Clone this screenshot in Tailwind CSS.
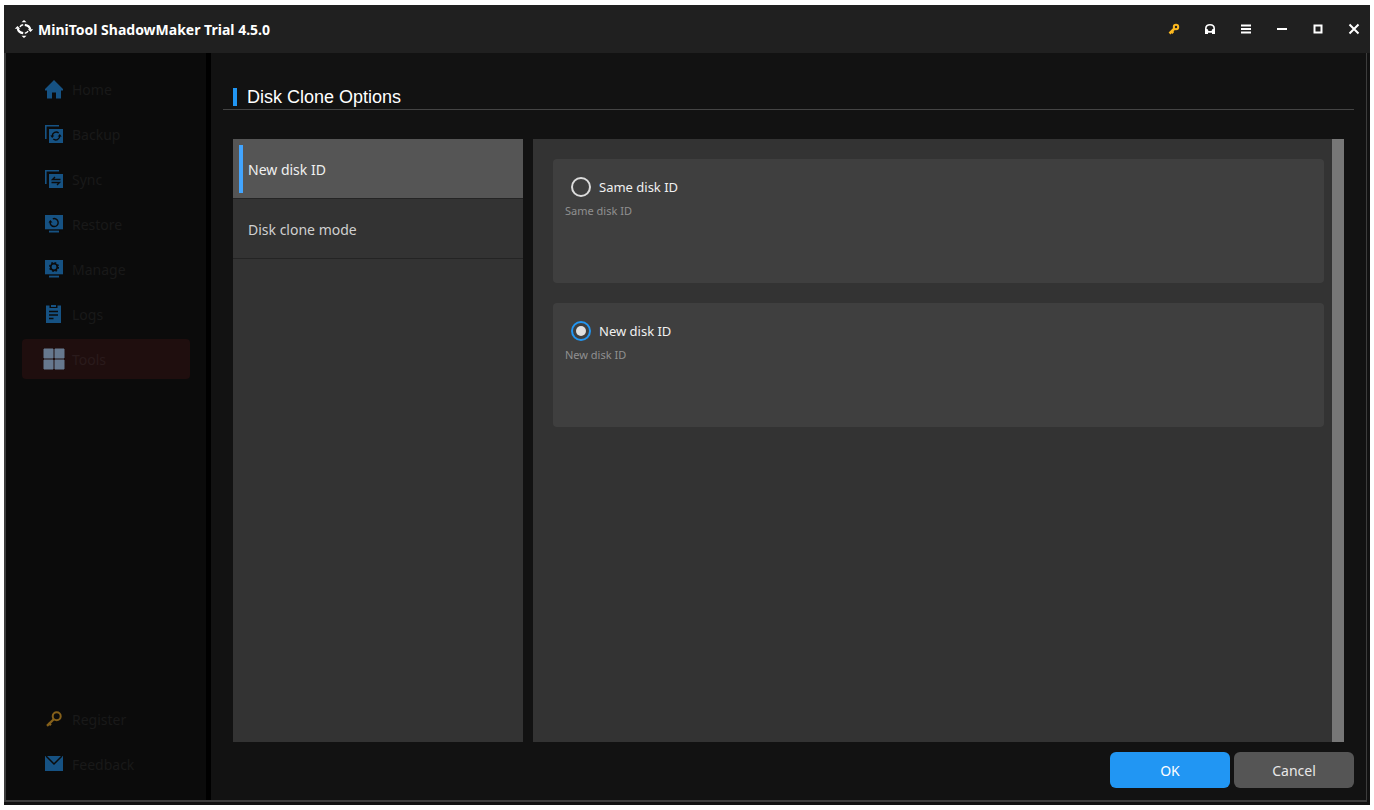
<!DOCTYPE html>
<html lang="en">
<head>
<meta charset="utf-8">
<title>MiniTool ShadowMaker Trial 4.5.0</title>
<script src="https://cdn.jsdelivr.net/npm/@tailwindcss/browser@4"></script>
</head>
<body class="flex h-screen flex-col bg-white px-1 py-[5px] font-['Noto_Sans',sans-serif] text-white">
<div class="flex min-h-0 flex-1 flex-col bg-[#121212] pb-[3px]">
  <header class="flex h-12 shrink-0 items-center justify-between bg-[#202020] px-[10px]">
    <div class="flex items-center gap-1">
      <svg class="size-5" viewBox="0 0 20 20" fill="#fff">
        <path d="M10 1 12.500 3.200H7.500zM10 19l2.500-2.200H7.500z"/>
        <path d="M.8 9.800 3.500 7 6.200 9.800zM19.200 10.200 16.500 13 13.800 10.200z"/>
        <path d="M3.800 9.500c.4 2.800 2.300 4.300 5.400 4.700M16.200 10.500c-.4-2.800-2.300-4.300-5.400-4.700" fill="none" stroke="#fff" stroke-width="2.200"/>
        <path d="M9.200 5.800C7.500 6 6.500 6.800 6 8M10.800 14.200c1.700-.2 2.700-1 3.200-2.200" fill="none" stroke="#fff" stroke-width="1.500"/>
      </svg>
      <h1 class="pt-0.5 text-sm font-bold">MiniTool ShadowMaker Trial 4.5.0</h1>
    </div>
    <div class="flex items-center gap-6">
      <button type="button" aria-label="Register key"><svg class="size-3" viewBox="0 0 12 12"><circle cx="8" cy="4" r="2.200" fill="none" stroke="#fcb81f" stroke-width="2"/><path d="M6.500 5.500 1.500 10.500M3.300 8 5.300 10" stroke="#fcb81f" stroke-width="2.500"/></svg></button>
      <button type="button" aria-label="Support"><svg class="size-3" viewBox="0 0 12 12"><path d="M1.800 7V5.500C1.800 3 3.500 1.800 6 1.800S10.200 3 10.200 5.500V7" fill="none" stroke="#fff" stroke-width="1.600"/><path d="M1 6h2.500L4.500 8h3l1-2H11v5H8V9.800H4V11H1z" fill="#fff"/></svg></button>
      <button type="button" aria-label="Menu"><svg class="size-3" viewBox="0 0 12 12"><path d="M1 2.500h10M1 6h10M1 9.500h10" stroke="#fff" stroke-width="2"/></svg></button>
      <button type="button" aria-label="Minimize"><svg class="size-3" viewBox="0 0 12 12"><path d="M1 6h10" stroke="#fff" stroke-width="2"/></svg></button>
      <button type="button" aria-label="Maximize"><svg class="size-3" viewBox="0 0 12 12"><path d="M2.500 2.500h7v7h-7z" fill="none" stroke="#fff" stroke-width="2"/></svg></button>
      <button type="button" aria-label="Close"><svg class="size-3" viewBox="0 0 12 12"><path d="m1.500 1.500 9 9m0-9-9 9" stroke="#fff" stroke-width="2"/></svg></button>
    </div>
  </header>

  <div class="mr-[3px] flex min-h-0 flex-1 border-r border-b-2 border-l-2 border-[#3d3d3d]">
    <nav class="flex w-[205px] shrink-0 flex-col justify-between border-r-[5px] border-black bg-[#0b0b0b] p-4 text-sm text-[#191919]">
      <div class="flex flex-col gap-[5px]">
        <a href="#" class="flex h-10 items-center gap-[7px] rounded pl-[21px]">
          <svg class="size-[22px]" viewBox="0 -1 22 22" fill="#165283"><path d="M11 1 20 10v1.500h-2V19.500h-5v-6H9v6H4v-8H2V10z"/></svg><span class="pt-0.5">Home</span></a>
        <a href="#" class="flex h-10 items-center gap-[7px] rounded pl-[21px]">
          <svg class="size-[22px]" viewBox="0 -1 22 22"><path d="M2.800 15V1.800H16" fill="none" stroke="#165283" stroke-width="1.600"/><path d="M6 5h14v14H6z" fill="#165283"/><path d="M9.200 12a4 4 0 0 1 6.500-3M16.800 12a4 4 0 0 1-6.500 3" fill="none" stroke="#0b0b0b" stroke-width="1.400"/><path d="M7.300 11.500h4L9.200 14zM18.700 12.500h-4l2.100-2.500z" fill="#0b0b0b"/></svg><span class="pt-0.5">Backup</span></a>
        <a href="#" class="flex h-10 items-center gap-[7px] rounded pl-[21px]">
          <svg class="size-[22px]" viewBox="0 -1 22 22"><path d="M2.800 15V1.800H16" fill="none" stroke="#165283" stroke-width="1.600"/><path d="M6 5h14v14H6z" fill="#165283"/><path d="M17.500 10.500H9.500L12 8M8.500 13.500h8L14 16" fill="none" stroke="#0b0b0b" stroke-width="1.400"/></svg><span class="pt-0.5">Sync</span></a>
        <a href="#" class="flex h-10 items-center gap-[7px] rounded pl-[21px]">
          <svg class="size-[22px]" viewBox="0 -1 22 22"><path d="M2 1h18v15H2zM6 16.500h10v2H6z" fill="#165283"/><path d="M2 15.800h18" stroke="#0b0b0b" stroke-width="1"/><path d="M7.200 8a4 4 0 1 0 2.600-3.200" fill="none" stroke="#0b0b0b" stroke-width="1.400"/><path d="M5.500 8.500 7.300 6l2.200 2.500z" fill="#0b0b0b"/></svg><span class="pt-0.5">Restore</span></a>
        <a href="#" class="flex h-10 items-center gap-[7px] rounded pl-[21px]">
          <svg class="size-[22px]" viewBox="0 -1 22 22"><path d="M2 1h18v15H2zM6 16.500h10v2H6z" fill="#165283"/><path d="M2 15.800h18" stroke="#0b0b0b" stroke-width="1"/><circle cx="11" cy="8" r="3.300" fill="none" stroke="#0b0b0b" stroke-width="1.700"/><circle cx="11" cy="8" r="4.400" fill="none" stroke="#0b0b0b" stroke-width="1.300" stroke-dasharray="1.728 1.728"/></svg><span class="pt-0.5">Manage</span></a>
        <a href="#" class="flex h-10 items-center gap-[7px] rounded pl-[21px]">
          <svg class="size-[22px]" viewBox="0 -1 22 22"><path d="M3 1.500h3.500v2.500h8V1.500H18V19H3z" fill="#165283"/><path d="M8 1h5v2H8z" fill="#165283"/><path d="M6 7.500h9M6 11h9M6 14.500h4.500" stroke="#0b0b0b" stroke-width="1.400"/></svg><span class="pt-0.5">Logs</span></a>
        <a href="#" class="flex h-10 items-center gap-[7px] rounded bg-[#1f0e0e] pl-[21px] text-[#2a1b1c]" aria-current="page">
          <svg class="size-[22px]" viewBox="0 0 22 22" fill="#66788e"><path d="M1 1h9v9H1zM12 1h9v9h-9zM1 12h9v9H1zM12 12h9v9h-9z" stroke="#66788e" stroke-linejoin="round"/></svg><span class="pt-0.5">Tools</span></a>
      </div>
      <div class="flex flex-col gap-[5px]">
        <a href="#" class="flex h-10 items-center gap-[7px] rounded pl-[21px]">
          <svg class="size-[22px]" viewBox="0 0 22 22" fill="none" stroke="#85601a"><circle cx="13.700" cy="8.200" r="4" stroke-width="2"/><path d="m11 11-7 6.800" stroke-width="2.400"/><path d="m5.700 14.700 2.200 2.500" stroke-width="2.200"/></svg><span class="pt-0.5">Register</span></a>
        <a href="#" class="flex h-10 items-center gap-[7px] rounded pl-[21px]">
          <svg class="size-[22px]" viewBox="0 0 22 22"><path d="M2 3h18v15H2z" fill="#165283"/><path d="m3 3 8 8 8-8" fill="none" stroke="#0b0b0b" stroke-width="1.500"/></svg><span class="pt-0.5">Feedback</span></a>
      </div>
    </nav>

    <main class="flex min-w-0 flex-1 flex-col px-3 pt-8 pb-3">
      <div class="flex h-[25px] shrink-0 items-center gap-[10px] border-b border-[#444] pl-[10px]">
        <span class="h-[18px] w-1 bg-[#2196f3]"></span>
        <h2 class="font-['Liberation_Sans',sans-serif] text-lg leading-6">Disk Clone Options</h2>
      </div>
      <div class="mx-[10px] mt-[29px] flex min-h-0 flex-1 gap-[10px]">
        <div class="w-[290px] shrink-0 bg-[#333] text-sm">
          <button type="button" class="flex h-[60px] w-full items-center gap-[5px] border-b border-[#242424] bg-[#555] pl-[6px] text-[#f0f0f0]">
            <span class="h-12 w-1 bg-[#42a5ff]"></span><span class="pt-0.5">New disk ID</span></button>
          <button type="button" class="flex h-[60px] w-full items-center border-b border-[#242424] pl-[15px] text-[#d0d0d0]"><span class="pt-0.5">Disk clone mode</span></button>
        </div>
        <div class="flex min-w-0 flex-1 bg-[#333]">
          <div class="flex flex-1 flex-col gap-5 py-5 pr-2 pl-5">
            <div class="h-[124px] rounded bg-[#3f3f3f] px-3 pt-[18px]">
              <label class="flex h-5 items-center gap-2 pl-[6px] text-[13px] text-[#f0f0f0]"><input type="radio" name="disk-id" class="size-5 appearance-none rounded-full border-2 border-[#dcdcdc] bg-clip-content p-[3px] checked:border-[#2196f3] checked:bg-[#e0e0e0]"><span class="pt-0.5">Same disk ID</span></label>
              <p class="mt-[6px] text-[11px] leading-4 text-[#909090]">Same disk ID</p>
            </div>
            <div class="h-[124px] rounded bg-[#3f3f3f] px-3 pt-[18px]">
              <label class="flex h-5 items-center gap-2 pl-[6px] text-[13px] text-[#f0f0f0]"><input type="radio" name="disk-id" checked class="size-5 appearance-none rounded-full border-2 border-[#dcdcdc] bg-clip-content p-[3px] checked:border-[#2196f3] checked:bg-[#e0e0e0]"><span class="pt-0.5">New disk ID</span></label>
              <p class="mt-[6px] text-[11px] leading-4 text-[#909090]">New disk ID</p>
            </div>
          </div>
          <div class="w-3 bg-[#777]"></div>
        </div>
      </div>
      <div class="mt-[10px] flex shrink-0 justify-end gap-1 text-sm">
        <button type="button" class="h-9 w-[120px] rounded-md bg-[#2196f3] pt-0.5">OK</button>
        <button type="button" class="h-9 w-[120px] rounded-md bg-[#555] pt-0.5 text-[#e8e8e8]">Cancel</button>
      </div>
    </main>
  </div>
</div>
</body>
</html>
